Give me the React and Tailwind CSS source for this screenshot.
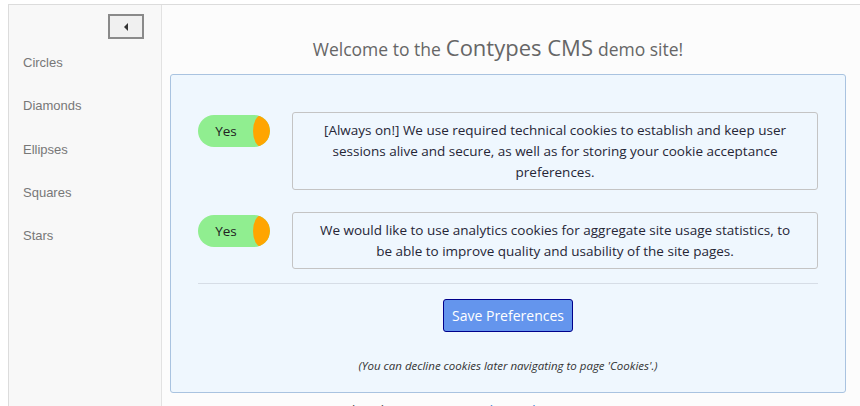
import React from "react";

const menu = ["Circles", "Diamonds", "Ellipses", "Squares", "Stars"];

const consents = [
  "[Always on!] We use required technical cookies to establish and keep user sessions alive and secure, as well as for storing your cookie acceptance preferences.",
  "We would like to use analytics cookies for aggregate site usage statistics, to be able to improve quality and usability of the site pages.",
];

const Toggle = () => (
  <div className="relative mt-[3px] flex h-[32px] w-[72px] shrink-0 items-center overflow-hidden rounded-full bg-[#90ee90]">
    <span className="w-[56px] text-center text-[13.5px] text-[#222]">Yes</span>
    <span className="absolute right-0 top-0 h-[32px] w-[17px] rounded-[50%] bg-[#ffa500]" />
  </div>
);

export default function App() {
  return (
    <div
      className="h-[406px] w-[860px] overflow-hidden bg-white pl-[8px] pt-[4px]"
      style={{ fontFamily: '"Open Sans", sans-serif' }}
    >
      <div className="flex h-[420px] border-l border-t border-[#dcdcdc]">
        {/* Sidebar */}
        <aside className="flex w-[153px] shrink-0 flex-col border-r border-[#e2e2e2] bg-[#f8f8f8]">
          <div className="flex justify-end pr-[17px] pt-[9px]">
            <button className="flex h-[25px] w-[36px] items-center justify-center border-2 border-[#8a8a8a] bg-[#f0f0f0]">
              <svg width="6" height="8" viewBox="0 0 6 8">
                <path d="M5 0 L1 4 L5 8 Z" fill="#333" />
              </svg>
            </button>
          </div>
          <nav
            className="mt-[16px] flex flex-col gap-[28.3px] pl-[14px] text-[13px] leading-[15px] text-[#777]"
            style={{ fontFamily: '"Liberation Sans", Arial, sans-serif' }}
          >
            {menu.map((m) => (
              <span key={m}>{m}</span>
            ))}
          </nav>
        </aside>

        {/* Main */}
        <main className="flex-1 bg-[#fcfcfc] pl-[8px] pr-[14px]">
          <h1 className="mr-[20px] mt-[28px] flex h-[28px] items-baseline justify-center gap-[5px] text-[17.5px] leading-[28px] text-[#666]">
            <span>Welcome to the</span>
            <span className="text-[22px]">Contypes CMS</span>
            <span>demo site!</span>
          </h1>

          <div className="mt-[13px] rounded-[3px] border border-[#a9c3e0] bg-[#eff7fe] px-[27px] pb-[19px] pt-[37px]">
            <div className="flex flex-col gap-[22px]">
              {consents.map((c, i) => (
                <div key={i} className="flex items-start gap-[22px]">
                  <Toggle />
                  <div className="flex-1 rounded-[3px] border border-[#c4c4c4] px-[20px] py-[6.5px] text-center text-[13.5px] leading-[21px] text-[#262636]">
                    {c}
                  </div>
                </div>
              ))}
            </div>

            <hr className="mt-[14px] border-[#d6dde6]" />

            <div className="mt-[15px] flex justify-center">
              <button className="h-[33px] w-[130px] rounded-[3px] border border-[#00008b] bg-[#6495ed] text-[14px] text-white">
                Save Preferences
              </button>
            </div>

            <p className="mt-[26px] text-center text-[11.5px] italic leading-[15px] text-[#333]">
              (You can decline cookies later navigating to page 'Cookies'.)
            </p>
          </div>

          <p className="mt-[6px] pl-[146px] text-[15px] text-[#555]">
            Use the shapes menu to <span className="text-[#4a8ad6]">begin browsing</span>
          </p>
        </main>
      </div>
    </div>
  );
}
